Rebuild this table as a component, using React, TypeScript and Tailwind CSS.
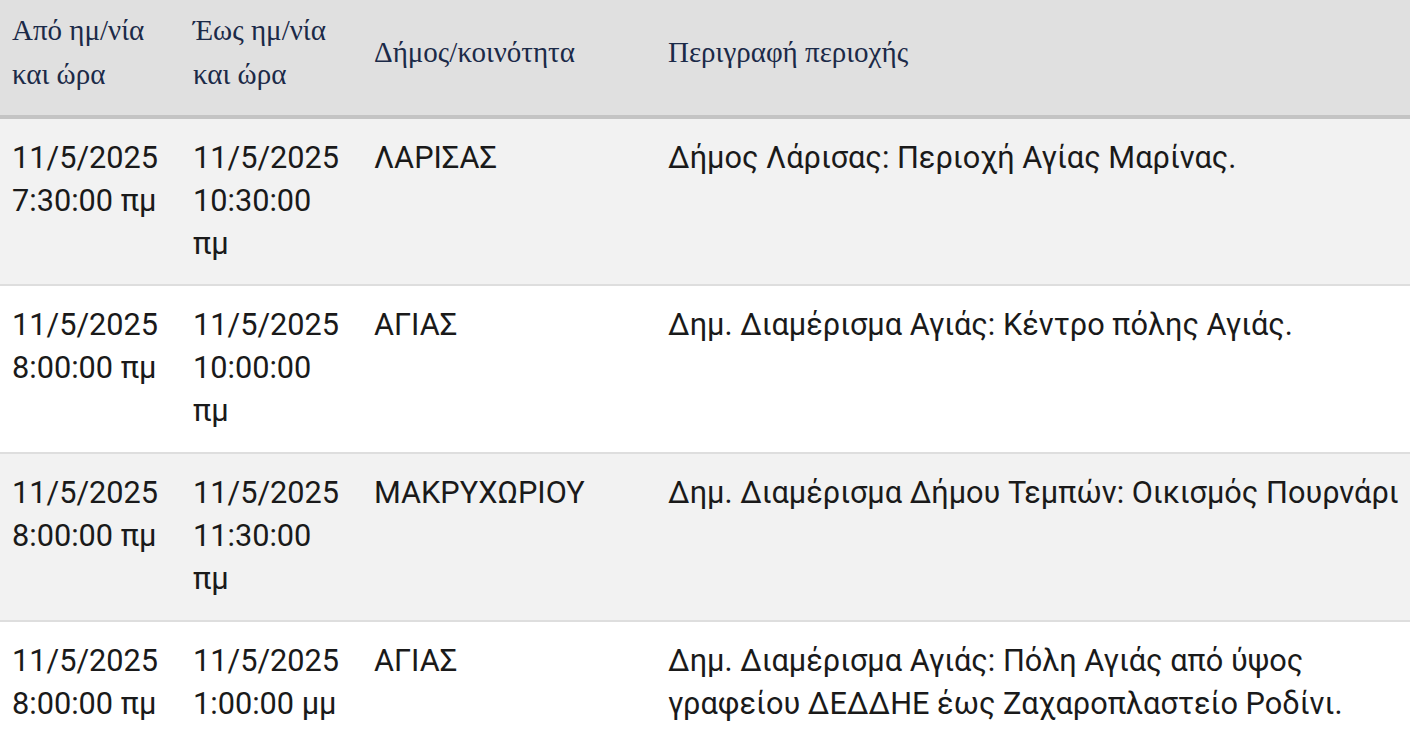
import React from 'react';

interface Outage {
  from: [string, string];
  to: [string, string];
  area: string;
  description: string;
}

const outages: Outage[] = [
  {
    from: ['11/5/2025', '7:30:00 πμ'],
    to: ['11/5/2025', '10:30:00 πμ'],
    area: 'ΛΑΡΙΣΑΣ',
    description: 'Δήμος Λάρισας: Περιοχή Αγίας Μαρίνας.',
  },
  {
    from: ['11/5/2025', '8:00:00 πμ'],
    to: ['11/5/2025', '10:00:00 πμ'],
    area: 'ΑΓΙΑΣ',
    description: 'Δημ. Διαμέρισμα Αγιάς: Κέντρο πόλης Αγιάς.',
  },
  {
    from: ['11/5/2025', '8:00:00 πμ'],
    to: ['11/5/2025', '11:30:00 πμ'],
    area: 'ΜΑΚΡΥΧΩΡΙΟΥ',
    description: 'Δημ. Διαμέρισμα Δήμου Τεμπών: Οικισμός Πουρνάρι',
  },
  {
    from: ['11/5/2025', '8:00:00 πμ'],
    to: ['11/5/2025', '1:00:00 μμ'],
    area: 'ΑΓΙΑΣ',
    description: 'Δημ. Διαμέρισμα Αγιάς: Πόλη Αγιάς από ύψος γραφείου ΔΕΔΔΗΕ έως Ζαχαροπλαστείο Ροδίνι.',
  },
];

const headers = ['Από ημ/νία και ώρα', 'Έως ημ/νία και ώρα', 'Δήμος/κοινότητα', 'Περιγραφή περιοχής'];

const App: React.FC = () => {
  return (
    <div className="w-[1410px] h-[733px] overflow-hidden bg-white">
      <table className="w-full table-fixed border-collapse">
        <colgroup>
          <col className="w-[181px]" />
          <col className="w-[181px]" />
          <col className="w-[294px]" />
          <col />
        </colgroup>
        <thead>
          <tr className="bg-[#e0e0e0] border-b-4 border-[#c4c4c4]">
            {headers.map((h) => (
              <th
                key={h}
                className="h-[117px] pl-3 pr-3 last:pr-0 pt-0 pb-[12px] text-left align-middle font-normal text-[29px] leading-[44px] text-[#1b2a48] [font-family:'Liberation_Serif','DejaVu_Serif',serif]"
              >
                {h}
              </th>
            ))}
          </tr>
        </thead>
        <tbody>
          {outages.map((o, i) => (
            <tr
              key={i}
              className={`${i % 2 === 0 ? 'bg-[#f2f2f2]' : 'bg-white'} border-b-2 border-[#dedede]`}
            >
              {[o.from.join(' '), o.to.join(' '), o.area, o.description].map((cell, j) => (
                <td
                  key={j}
                  className="h-[168px] pl-3 pr-3 last:pr-0 pt-[17px] pb-[18px] align-top text-[30.7px] leading-[43px] text-[#1a1a1a] [font-family:Roboto,'Liberation_Sans',sans-serif]"
                >
                  {cell}
                </td>
              ))}
            </tr>
          ))}
        </tbody>
      </table>
    </div>
  );
};

export default App;
